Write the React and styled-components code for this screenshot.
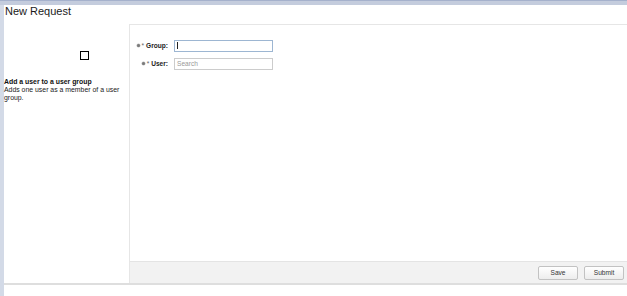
import styled, { createGlobalStyle } from "styled-components"

const GlobalStyle = createGlobalStyle`
    html, body {
        margin: 0;
        padding: 0;
        background: #ffffff;
    }
    body {
        font-family: "Liberation Sans", Arial, sans-serif;
        color: #000000;
    }
`

const Page = styled.div`
    display: flex;
    flex-direction: column;
    width: 627px;
    height: 296px;
    overflow: hidden;
`

const TopBar = styled.div`
    height: 4px;
    background: #c4ccdd;
    border-top: 1px solid #a5b1cc;
    flex-shrink: 0;
`

const Body = styled.div`
    display: flex;
    flex: 1;
`

const Rail = styled.div`
    width: 4px;
    background: #d3dae7;
    flex-shrink: 0;
`

const Main = styled.div`
    display: flex;
    flex-direction: column;
    flex: 1;
`

const Title = styled.div`
    height: 19px;
    padding-left: 1px;
    font-size: 11px;
    line-height: 13px;
    color: #1a1a1a;
`

const Content = styled.div`
    display: flex;
    height: 259px;
    border-bottom: 2px solid #dedede;
`

const Side = styled.div`
    width: 125px;
    flex-shrink: 0;
    padding-top: 27px;
`

const Check = styled.div`
    width: 7px;
    height: 7px;
    border: 1px solid #000000;
    margin-left: 76px;
`

const SideTitle = styled.div`
    margin-top: 18px;
    font-size: 6.9px;
    line-height: 8px;
    font-weight: bold;
    color: #111111;
`

const SideText = styled.div`
    font-size: 6.9px;
    line-height: 8px;
    color: #222222;
    padding-right: 6px;
`

const FormPanel = styled.div`
    display: flex;
    flex-direction: column;
    flex: 1;
    border-left: 1px solid #e6e6e6;
    border-top: 1px solid #e6e6e6;
`

const Form = styled.div`
    flex: 1;
    display: flex;
    flex-direction: column;
    gap: 7px;
    padding: 15px 0 0 5px;
`

const Row = styled.div`
    display: flex;
    align-items: center;
    height: 11px;
`

const Label = styled.label`
    display: flex;
    align-items: center;
    justify-content: flex-end;
    gap: 2px;
    width: 33px;
    font-size: 6.6px;
    font-weight: bold;
    color: #222222;
    margin-right: 6px;
    white-space: nowrap;
`

const Dot = styled.span`
    width: 3px;
    height: 3px;
    border-radius: 50%;
    background: #7a7a7a;
    box-shadow: 0 0 0 0.5px #bbbbbb;
`

const Star = styled.span`
    color: #666666;
    font-weight: normal;
`

const Input = styled.div`
    box-sizing: border-box;
    width: 99px;
    height: 12px;
    border: 1px solid ${p => p.$focus ? "#9db6d2" : "#cccccc"};
    font-size: 6.6px;
    color: #999999;
    padding-left: 2px;
    line-height: 10px;
    display: flex;
    align-items: center;
`

const Caret = styled.span`
    width: 1px;
    height: 7px;
    background: #222222;
`

const Footer = styled.div`
    height: 21px;
    background: #f2f2f2;
    border-top: 1px solid #e4e4e4;
    display: flex;
    justify-content: flex-end;
    align-items: center;
    gap: 6px;
    padding-right: 3px;
`

const Button = styled.button`
    box-sizing: border-box;
    width: 40px;
    height: 14px;
    padding: 0;
    border: 1px solid #c2c2c2;
    border-radius: 2px;
    background: linear-gradient(#ffffff, #ededed);
    font-family: "Liberation Sans", Arial, sans-serif;
    font-size: 6.6px;
    color: #333333;
`

const App = () => {
    return (
        <>
            <GlobalStyle/>
            <Page>
                <TopBar/>
                <Body>
                    <Rail/>
                    <Main>
                        <Title>New Request</Title>
                        <Content>
                            <Side>
                                <Check/>
                                <SideTitle>Add a user to a user group</SideTitle>
                                <SideText>Adds one user as a member of a user group.</SideText>
                            </Side>
                            <FormPanel>
                                <Form>
                                    <Row>
                                        <Label><Dot/><span><Star>*</Star> Group:</span></Label>
                                        <Input $focus><Caret/></Input>
                                    </Row>
                                    <Row>
                                        <Label><Dot/><span><Star>*</Star> User:</span></Label>
                                        <Input>Search</Input>
                                    </Row>
                                </Form>
                                <Footer>
                                    <Button>Save</Button>
                                    <Button>Submit</Button>
                                </Footer>
                            </FormPanel>
                        </Content>
                    </Main>
                </Body>
            </Page>
        </>
    )
}

export default App
